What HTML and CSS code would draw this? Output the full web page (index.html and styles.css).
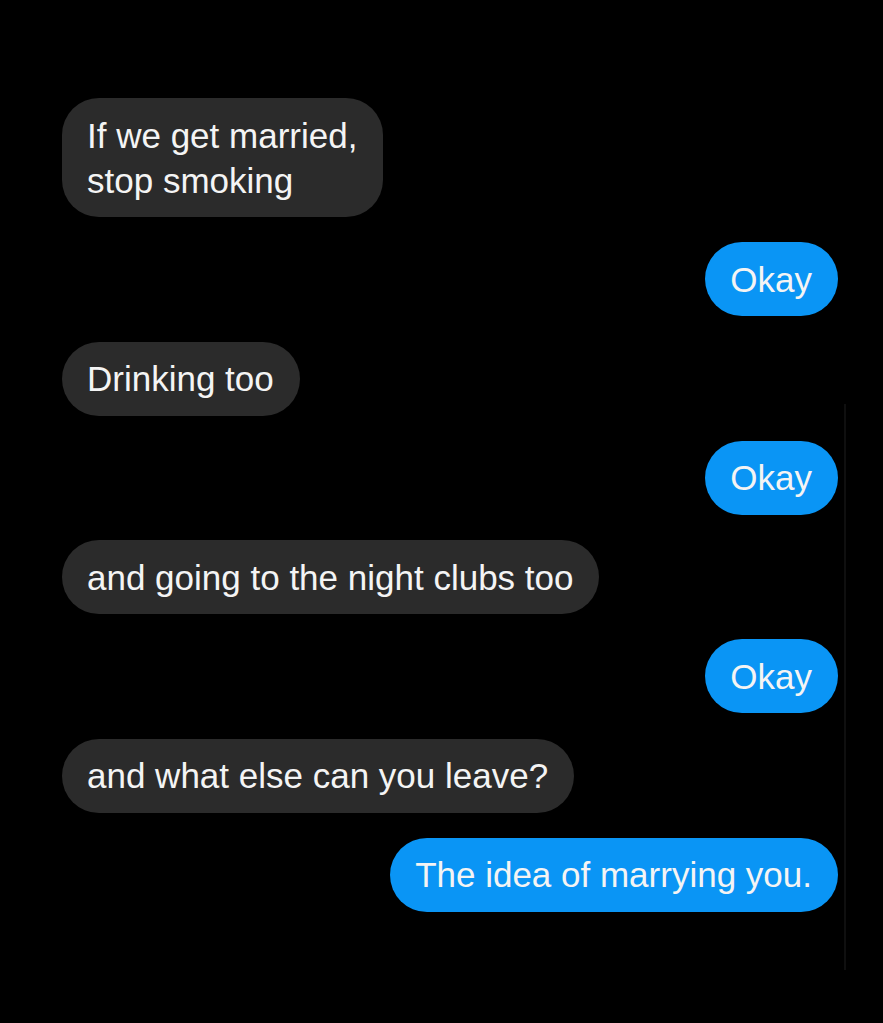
FILE: index.html
```html
<!DOCTYPE html>
<html lang="en">
<head>
    <meta charset="UTF-8">
    <meta name="viewport" content="width=device-width, initial-scale=1.0">
    <title>Chat</title>
    <link rel="stylesheet" href="styles.css">
</head>
<body>
    <div class="chat">
        <div class="bubble received">If we get married,<br>stop smoking</div>
        <div class="bubble sent">Okay</div>
        <div class="bubble received">Drinking too</div>
        <div class="bubble sent">Okay</div>
        <div class="bubble received">and going to the night clubs too</div>
        <div class="bubble sent">Okay</div>
        <div class="bubble received">and what else can you leave?</div>
        <div class="bubble sent">The idea of marrying you.</div>
    </div>
    <div class="scroll-track"></div>
</body>
</html>
```

FILE: styles.css
```css
body {
    margin: 0;
    background: #000;
    font-family: "Liberation Sans", Arial, sans-serif;
    min-height: 100vh;
}

.chat {
    display: flex;
    flex-direction: column;
    gap: 25.25px;
    padding: 98px 45px 0 62px;
}

.bubble {
    font-size: 35px;
    line-height: 45px;
    color: #f4f4f4;
    padding: 14.5px 26px 14.5px 25px;
    border-radius: 37px;
}

.received {
    align-self: flex-start;
    background: #2b2b2b;
}

.sent {
    align-self: flex-end;
    background: #0a95f5;
}

/* faint scroll indicator on the right edge */
.scroll-track {
    position: absolute;
    left: 844px;
    top: 404px;
    width: 2px;
    height: 566px;
    background: #0f0f0f;
}
```
